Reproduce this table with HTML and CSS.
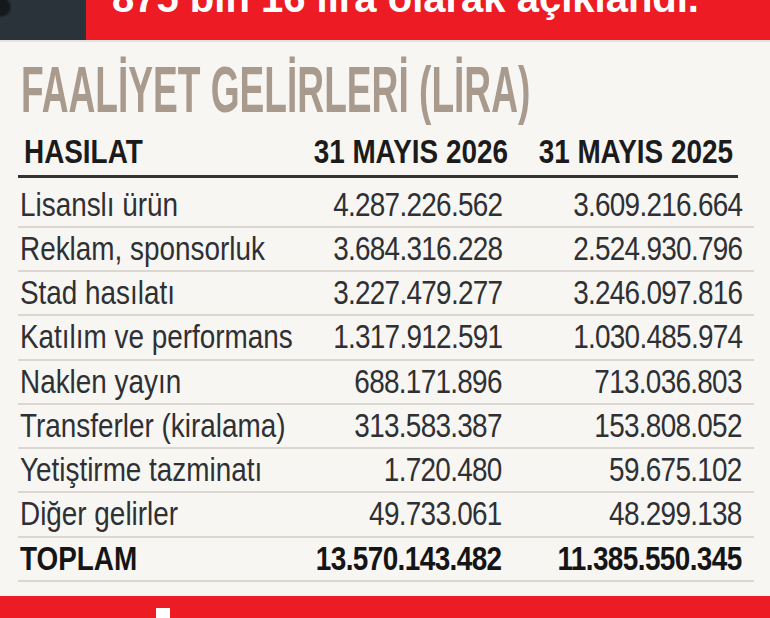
FILE: index.html
```html
<!DOCTYPE html>
<html lang="tr">
<head>
<meta charset="utf-8">
<title>Faaliyet Gelirleri</title>
<link rel="stylesheet" href="styles.css">
</head>
<body>
<div class="page">
  <div class="topbar">
    <div class="photo"></div>
    <div class="banner"><p class="banner-text">875 bin 16 lira olarak açıklandı.</p></div>
  </div>
  <h1 class="title"><span>FAALİYET GELİRLERİ (LİRA)</span></h1>
  <div class="table">
    <div class="head"><span class="c-label"><span>HASILAT</span></span><span class="c-a"><span>31 MAYIS 2026</span></span><span class="c-b"><span>31 MAYIS 2025</span></span></div>
    <div class="row"><span class="c-label"><span>Lisanslı ürün</span></span><span class="c-a"><span>4.287.226.562</span></span><span class="c-b"><span>3.609.216.664</span></span></div>
    <div class="row"><span class="c-label"><span>Reklam, sponsorluk</span></span><span class="c-a"><span>3.684.316.228</span></span><span class="c-b"><span>2.524.930.796</span></span></div>
    <div class="row"><span class="c-label"><span>Stad hasılatı</span></span><span class="c-a"><span>3.227.479.277</span></span><span class="c-b"><span>3.246.097.816</span></span></div>
    <div class="row"><span class="c-label"><span>Katılım ve performans</span></span><span class="c-a"><span>1.317.912.591</span></span><span class="c-b"><span>1.030.485.974</span></span></div>
    <div class="row"><span class="c-label"><span>Naklen yayın</span></span><span class="c-a"><span>688.171.896</span></span><span class="c-b"><span>713.036.803</span></span></div>
    <div class="row"><span class="c-label"><span>Transferler (kiralama)</span></span><span class="c-a"><span>313.583.387</span></span><span class="c-b"><span>153.808.052</span></span></div>
    <div class="row"><span class="c-label"><span>Yetiştirme tazminatı</span></span><span class="c-a"><span>1.720.480</span></span><span class="c-b"><span>59.675.102</span></span></div>
    <div class="row"><span class="c-label"><span>Diğer gelirler</span></span><span class="c-a"><span>49.733.061</span></span><span class="c-b"><span>48.299.138</span></span></div>
    <div class="row total"><span class="c-label"><span>TOPLAM</span></span><span class="c-a"><span>13.570.143.482</span></span><span class="c-b"><span>11.385.550.345</span></span></div>
  </div>
  <div class="footbar"><span class="mark"></span></div>
</div>
</body>
</html>
```
FILE: styles.css
```css
html, body {
  margin: 0;
  padding: 0;
}
body {
  background: #f7f6f3;
  width: 770px;
  height: 618px;
  overflow: hidden;
  font-family: "Liberation Sans", Arial, sans-serif;
}
.page {
  display: flex;
  flex-direction: column;
  height: 618px;
}
.topbar {
  display: flex;
  flex: none;
  height: 40px;
  border-bottom: 2px solid #e6e2dd;
}
.photo {
  width: 86px;
  background: radial-gradient(circle at 1px 7px, #15191d 0 8px, rgba(21,25,29,0) 11px), #2b333a;
}
.banner {
  flex: 1;
  background: #ed1c24;
  overflow: hidden;
  padding-left: 26px;
}
.banner-text {
  margin: -22px 0 0;
  font-weight: bold;
  font-size: 40px;
  line-height: 40px;
  color: #ffffff;
  white-space: nowrap;
}
.title {
  margin: 16px 0 0 21px;
  height: 64px;
  font-weight: bold;
  font-size: 64px;
  line-height: 64px;
  color: #a99a8e;
  white-space: nowrap;
}
.title span {
  display: inline-block;
  transform: scaleX(0.58);
  transform-origin: 0 50%;
}
.table {
  margin: 9px 0 0 18px;
  width: 736px;
}
.head,
.row {
  display: flex;
  font-size: 34px;
  line-height: 40px;
  white-space: nowrap;
}
.c-label {
  flex: 1;
  min-width: 0;
}
.c-a,
.c-b {
  flex: none;
  display: flex;
  justify-content: flex-end;
}
.c-label > span,
.c-a > span,
.c-b > span {
  display: inline-block;
  flex: none;
  transform: scaleX(0.82);
}
.c-label > span {
  transform-origin: 0 50%;
}
.c-a > span,
.c-b > span {
  transform-origin: 100% 50%;
}
.head {
  width: 715px;
  padding-right: 5px;
  padding-bottom: 4px;
  margin-bottom: 5.5px;
  border-bottom: 3px solid #333333;
  font-weight: bold;
  color: #1b1b1b;
}
.head .c-label {
  padding-left: 6px;
}
.head .c-a {
  width: 250px;
}
.head .c-b {
  width: 225px;
}
.row {
  padding-right: 12px;
  padding-bottom: 2.25px;
  border-bottom: 2px solid #dcd7d0;
  color: #2e3034;
}
.row .c-label {
  padding-left: 2px;
}
.row .c-a,
.row .c-b {
  width: 240px;
  letter-spacing: -0.85px;
}
.row.total {
  font-weight: bold;
  color: #151515;
}
.row.total .c-a,
.row.total .c-b {
  letter-spacing: -0.7px;
}
.footbar {
  flex: none;
  margin-top: auto;
  height: 22px;
  background: #ed1c24;
  overflow: hidden;
}
.mark {
  display: block;
  width: 14px;
  height: 10px;
  margin: 12px 0 0 156px;
  background: #ffffff;
}
```
